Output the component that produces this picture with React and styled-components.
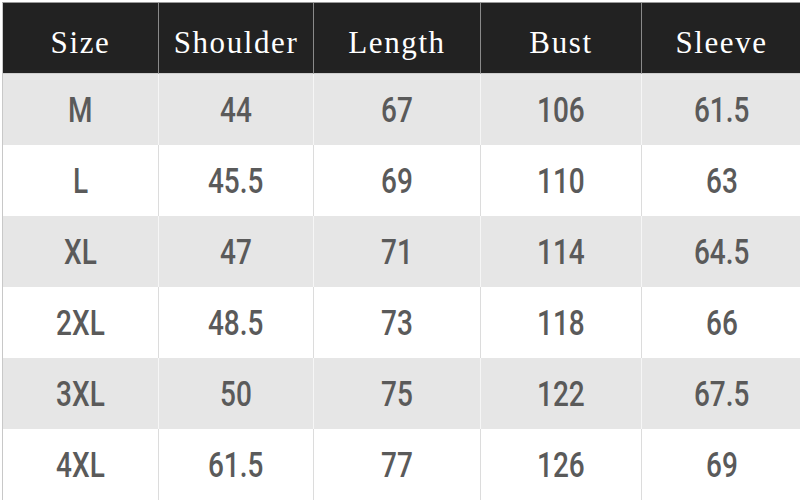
import React from "react";
import styled, { createGlobalStyle } from "styled-components";

const Global = createGlobalStyle`
  html, body { margin: 0; padding: 0; background: #ffffff; }
  body { width: 800px; height: 500px; overflow: hidden; }
`;

const Page = styled.div`
  width: 800px;
  height: 500px;
  padding: 2px 0 0 2px;
  box-sizing: border-box;
  background: #ffffff;
`;

const Table = styled.div`
  display: grid;
  grid-template-columns: 155px 155px 167px 161px 160px;
  grid-template-rows: 71px repeat(6, 71px);
  border-left: 1px solid #c8c8c8;
  border-top: 1px solid #9a9a9a;
`;

const HeadCell = styled.div`
  display: flex;
  align-items: center;
  justify-content: center;
  background: #222222;
  color: #ffffff;
  font-family: "Liberation Serif", "Times New Roman", serif;
  font-size: 31px;
  letter-spacing: 1.6px;
  padding-top: 10px;
  box-sizing: border-box;
  border-left: ${(p) => (p.$first ? "none" : "1px solid #8a8a8a")};
  border-bottom: 1px solid #cfcfcf;
`;

const Cell = styled.div`
  display: flex;
  align-items: center;
  justify-content: center;
  background: ${(p) => (p.$shade ? "#e6e6e6" : "#ffffff")};
  border-left: ${(p) =>
    p.$first ? "none" : p.$shade ? "1px solid #f6f6f6" : "1px solid #dcdcdc"};
  box-sizing: border-box;
  padding-top: 2px;
`;

const Value = styled.span`
  display: inline-block;
  font-family: "Roboto", "Liberation Sans", sans-serif;
  font-weight: 500;
  font-size: 35px;
  color: #5a5a5a;
  transform: scaleX(0.8);
`;

const headers = ["Size", "Shoulder", "Length", "Bust", "Sleeve"];
const rows = [
  ["M", "44", "67", "106", "61.5"],
  ["L", "45.5", "69", "110", "63"],
  ["XL", "47", "71", "114", "64.5"],
  ["2XL", "48.5", "73", "118", "66"],
  ["3XL", "50", "75", "122", "67.5"],
  ["4XL", "61.5", "77", "126", "69"],
];

export default function App() {
  return (
    <>
      <Global />
      <Page>
        <Table>
          {headers.map((h, i) => (
            <HeadCell key={h} $first={i === 0}>
              {h}
            </HeadCell>
          ))}
          {rows.map((r, ri) =>
            r.map((v, ci) => (
              <Cell key={ri + "-" + ci} $shade={ri % 2 === 0} $first={ci === 0}>
                <Value>{v}</Value>
              </Cell>
            ))
          )}
        </Table>
      </Page>
    </>
  );
}
